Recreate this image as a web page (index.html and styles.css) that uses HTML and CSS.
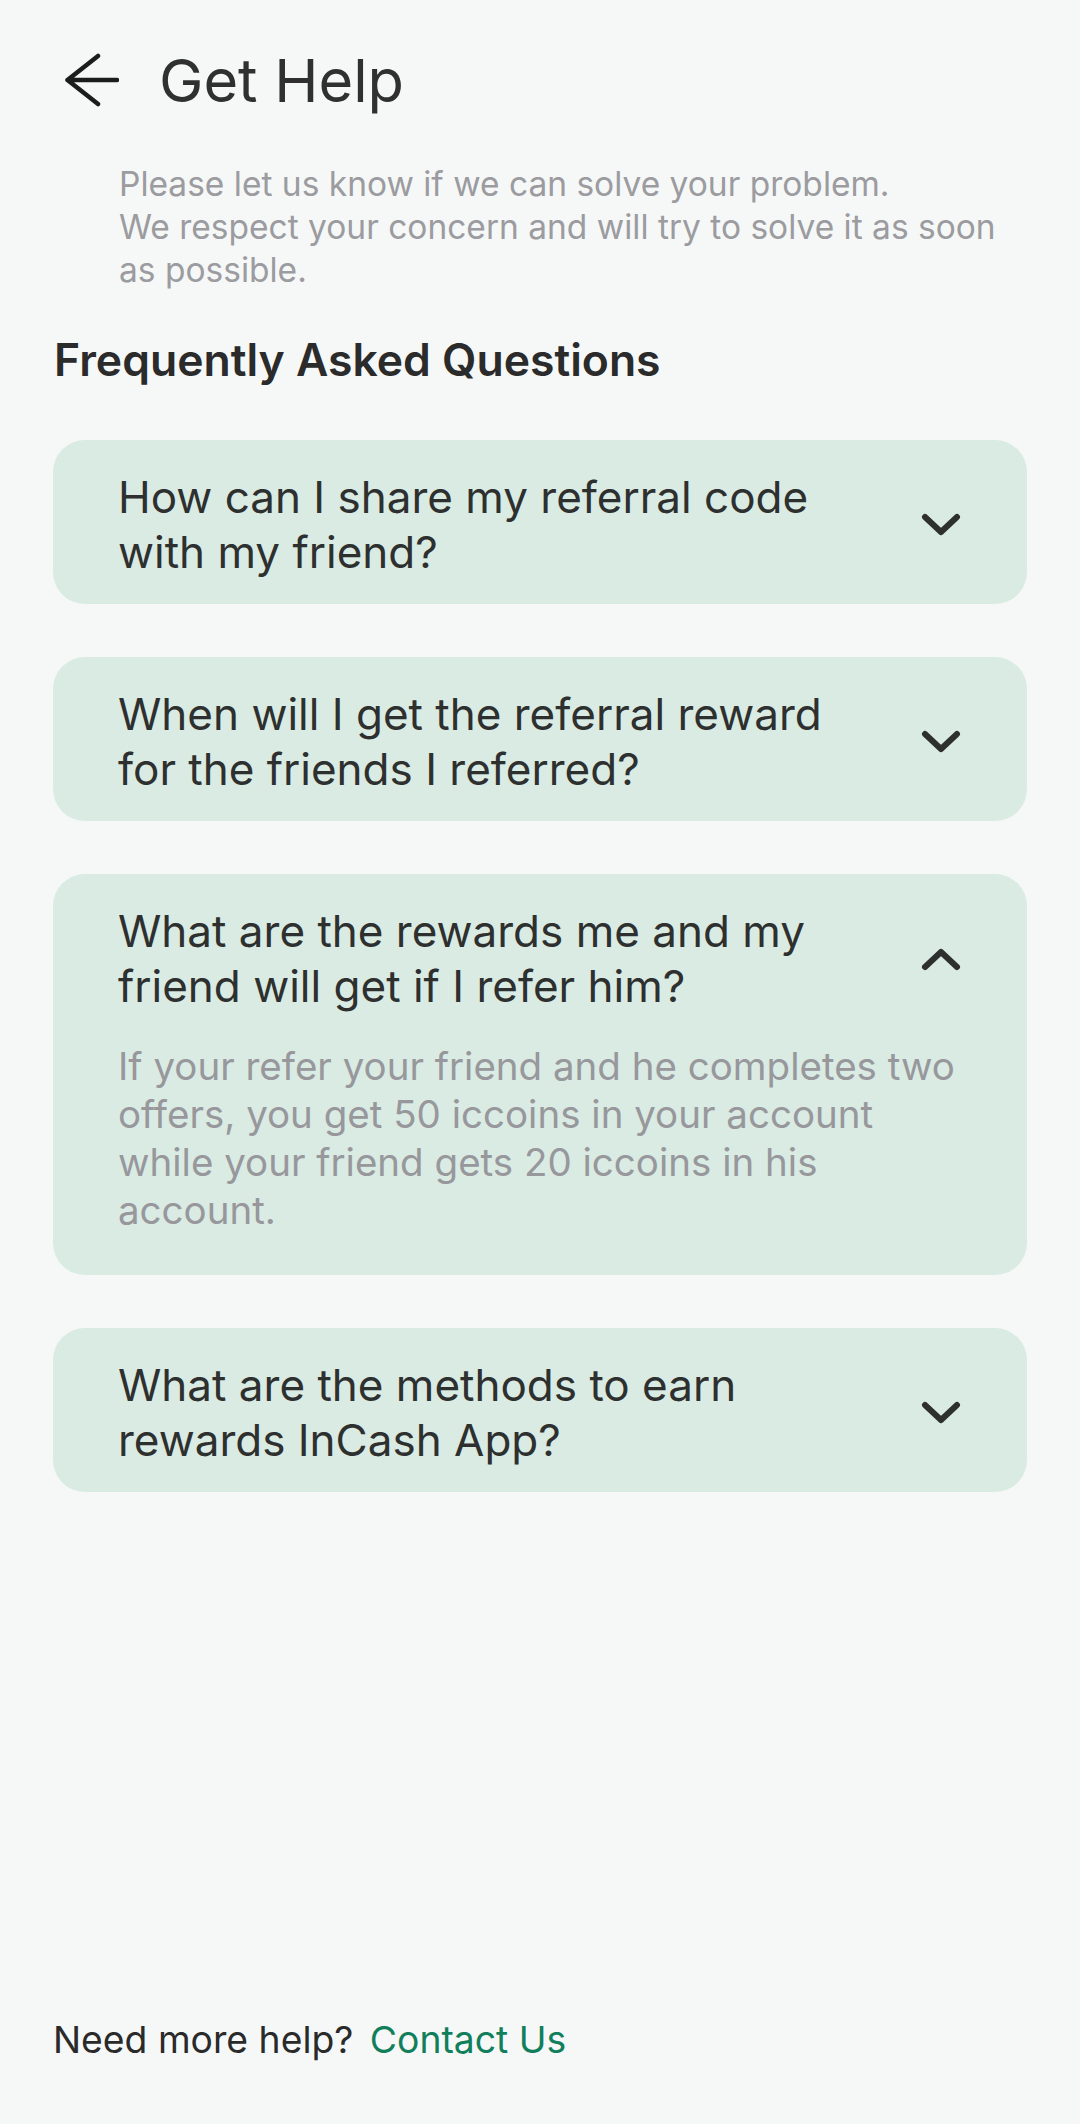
FILE: index.html
```html
<!DOCTYPE html>
<html lang="en">
<head>
    <meta charset="UTF-8">
    <meta name="viewport" content="width=device-width, initial-scale=1.0">
    <title>Get Help</title>
    <link rel="stylesheet" href="styles.css">
</head>
<body>
<div class="page">
    <header class="topbar">
        <button class="back" aria-label="Back">
            <svg width="54" height="54" viewBox="0 0 54 54">
                <path d="M33 3 L2.5 27 L33 51 M2.5 27 H52" fill="none" stroke="#1c1c1c" stroke-width="4.5" stroke-linecap="round" stroke-linejoin="round"/>
            </svg>
        </button>
        <h1>Get Help</h1>
    </header>

    <p class="intro">
        Please let us know if we can solve your problem.<br>
        We respect your concern and will try to solve it as soon as possible.
    </p>

    <h2 class="faq-title">Frequently Asked Questions</h2>

    <div class="faq-list">
        <div class="faq-item">
            <div class="question">
                <span>How can I share my referral code with my friend?</span>
                <svg class="chevron" width="40" height="24" viewBox="0 0 40 24"><polyline points="4,4 20,19 36,4"/></svg>
            </div>
        </div>

        <div class="faq-item">
            <div class="question">
                <span>When will I get the referral reward for the friends I referred?</span>
                <svg class="chevron" width="40" height="24" viewBox="0 0 40 24"><polyline points="4,4 20,19 36,4"/></svg>
            </div>
        </div>

        <div class="faq-item open">
            <div class="question">
                <span>What are the rewards me and my friend will get if I refer him?</span>
                <svg class="chevron" width="40" height="24" viewBox="0 0 40 24"><polyline points="4,20 20,5 36,20"/></svg>
            </div>
            <p class="answer">If your refer your friend and he completes two offers, you get 50 iccoins in your account while your friend gets 20 iccoins in his account.</p>
        </div>

        <div class="faq-item">
            <div class="question">
                <span>What are the methods to earn rewards InCash App?</span>
                <svg class="chevron" width="40" height="24" viewBox="0 0 40 24"><polyline points="4,4 20,19 36,4"/></svg>
            </div>
        </div>
    </div>

    <footer class="help-footer">
        Need more help? <a href="#" class="contact">Contact Us</a>
    </footer>
</div>
</body>
</html>
```
FILE: styles.css
```css
body {
    margin: 0;
    font-family: Inter, "Noto Sans", sans-serif;
    background-color: #f5f8f7;
    color: #2e302f;
}

.page {
    min-height: 100vh;
    display: flex;
    flex-direction: column;
}

.topbar {
    display: flex;
    align-items: center;
    gap: 40px;
    padding: 51px 0 0 65px;
}

.back {
    display: flex;
    padding: 0;
    border: none;
    background: transparent;
    cursor: pointer;
}

h1 {
    margin: 0;
    font-size: 59.5px;
    line-height: 58.5px;
    font-weight: 400;
    color: #303030;
}

.intro {
    margin: 53px 0 0;
    padding: 0 58px 0 119px;
    font-size: 33.5px;
    line-height: 43px;
    color: #9b9ba0;
}

.faq-title {
    margin: 42px 0 0 54px;
    font-size: 44.5px;
    line-height: 53px;
    font-weight: 600;
    color: #2b2b2b;
}

.faq-list {
    display: flex;
    flex-direction: column;
    gap: 53px;
    margin-top: 53px;
    padding: 0 53px;
}

.faq-item {
    background-color: #d9ebe3;
    border-radius: 32px;
    padding: 30px 66px 24px 65px;
}

.question {
    display: flex;
    align-items: center;
    justify-content: space-between;
    gap: 40px;
    font-size: 44px;
    line-height: 55px;
}

.chevron {
    flex-shrink: 0;
}

.chevron polyline {
    fill: none;
    stroke: #2e302f;
    stroke-width: 6;
    stroke-linecap: round;
    stroke-linejoin: round;
}

.open {
    padding-bottom: 41px;
}

.answer {
    margin: 28px -14px 0 0;
    font-size: 38.5px;
    line-height: 48px;
    color: #97979c;
}

.help-footer {
    margin-top: auto;
    padding: 0 0 62px 53px;
    font-size: 37.3px;
    line-height: 44px;
    color: #2a2a2a;
}

.contact {
    margin-left: 6px;
    color: #117f5b;
    text-decoration: none;
}
```
